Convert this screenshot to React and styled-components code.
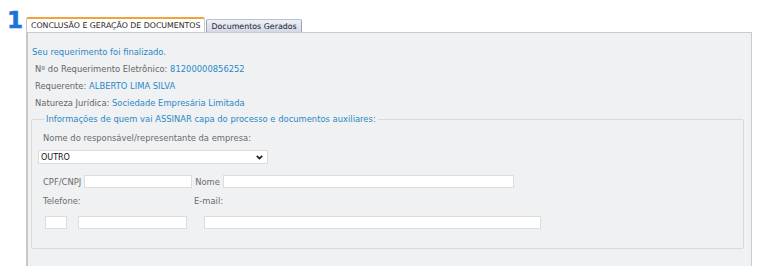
import React from 'react'
import styled, { createGlobalStyle } from "styled-components"

const Global = createGlobalStyle`
  body {
    margin: 0;
    background: #ffffff;
    font-family: "DejaVu Sans", Verdana, sans-serif;
  }
`

function App() {
  return (
    <Page>
      <Global />
      <Step>1</Step>
      <Main>
        <TabBar>
          <Tab active>CONCLUSÃO E GERAÇÃO DE DOCUMENTOS</Tab>
          <Tab>Documentos Gerados</Tab>
        </TabBar>
        <Panel>
          <Notice>Seu requerimento foi finalizado.</Notice>
          <Info>Nº do Requerimento Eletrônico: <Value>81200000856252</Value></Info>
          <Info>Requerente: <Value>ALBERTO LIMA SILVA</Value></Info>
          <Info>Natureza Jurídica: <Value>Sociedade Empresária Limitada</Value></Info>
          <Group>
            <Legend>Informações de quem vai ASSINAR capa do processo e documentos auxiliares:</Legend>
            <Label>Nome do responsável/representante da empresa:</Label>
            <SelectWrap>
              <Select defaultValue="OUTRO">
                <option>OUTRO</option>
              </Select>
              <Chevron viewBox="0 0 10 7">
                <path d="M1.2 1.2 L5 5 L8.8 1.2" fill="none" stroke="#1a1a1a" strokeWidth="2.4" />
              </Chevron>
            </SelectWrap>
            <Row>
              <Label inline>CPF/CNPJ</Label>
              <Input w={108} />
              <Label inline>Nome</Label>
              <Input w={291} />
            </Row>
            <Labels>
              <Label inline w={151}>Telefone:</Label>
              <Label inline>E-mail:</Label>
            </Labels>
            <Row pad={2}>
              <Input w={22} />
              <Input w={109} gap={11} />
              <Input w={337} gap={17} />
            </Row>
          </Group>
        </Panel>
      </Main>
    </Page>
  )
}

const Page = styled.div`
  display: flex;
  align-items: flex-start;
  padding: 12px 0 0 8px;
  height: 254px;
  overflow: hidden;
`
const Step = styled.div`
  width: 18px;
  margin-left: -1px;
  font-family: "DejaVu Sans", Verdana, sans-serif;
  font-weight: 900;
  font-size: 23px;
  line-height: 17px;
  height: 17px;
  color: #1a73d9;
  -webkit-text-stroke: 0.6px #1a73d9;
`
const Main = styled.div`
  width: 726px;
  margin-top: 5px;
  margin-left: 1px;
`
const TabBar = styled.div`
  display: flex;
  align-items: flex-end;
  gap: 1px;
  height: 15px;
`
const Tab = styled.div`
  box-sizing: border-box;
  font-size: ${p => (p.active ? "7.8px" : "7.9px")};
  color: #1f1f1f;
  padding: 0 4px;
  display: flex;
  align-items: center;
  height: ${p => (p.active ? "15px" : "13px")};
  background: ${p => (p.active ? "#ffffff" : "linear-gradient(#eef0f8, #d3d8e8)")};
  border: 1px solid ${p => (p.active ? "#c9c9c9" : "#9aa3b5")};
  border-top: ${p => (p.active ? "2px solid #f2a43a" : "1px solid #b7bfd0")};
  border-bottom: none;
  border-radius: 2px 2px 0 0;
`
const Panel = styled.div`
  box-sizing: border-box;
  height: 240px;
  background: #eff1f3;
  border: 1px solid #c9cbcd;
  border-left: 2px solid #c5c7c9;
  padding: 14px 7px 0 3px;
`
const Notice = styled.div`
  font-size: 8.4px;
  color: #2b88c6;
  padding-left: 1px;
  height: 17px;
`
const Info = styled.div`
  font-size: 8.4px;
  color: #666666;
  padding-left: 4px;
  height: 17px;
`
const Value = styled.span`
  color: #2b88c6;
`
const Group = styled.fieldset`
  box-sizing: border-box;
  margin: -1px 0 0;
  padding: 9px 0 0 6px;
  height: 135px;
  border: 1px solid #d8dadc;
  border-radius: 2px;
`
const Legend = styled.legend`
  font-size: 8.4px;
  color: #2b88c6;
  padding: 0 2px;
  margin-left: 6px;
`
const Label = styled.span`
  display: ${p => (p.inline ? "inline-block" : "block")};
  font-size: 8.4px;
  color: #6b6b6b;
  width: ${p => (p.w ? `${p.w}px` : "auto")};
  padding-left: ${p => (p.inline ? "0" : "5px")};
  margin-bottom: ${p => (p.inline ? "0" : "7px")};
`
const SelectWrap = styled.div`
  position: relative;
  width: 230px;
  height: 14px;
  margin-bottom: 11px;
`
const Select = styled.select`
  appearance: none;
  display: block;
  box-sizing: border-box;
  width: 230px;
  height: 14px;
  border: 1px solid #dcdcdc;
  background: #ffffff;
  font-family: "DejaVu Sans", Verdana, sans-serif;
  font-size: 8px;
  color: #111;
  padding: 0 2px;
  outline: none;
`
const Chevron = styled.svg`
  position: absolute;
  right: 5px;
  top: 5px;
  width: 7px;
  height: 5px;
  pointer-events: none;
`
const Row = styled.div`
  display: flex;
  align-items: center;
  gap: 3px;
  padding-left: ${p => (p.pad ? `${p.pad + 5}px` : "5px")};
  height: 13px;
`
const Labels = styled.div`
  display: flex;
  padding-left: 5px;
  margin: 8px 0 8px;
  height: 12px;
`
const Input = styled.input`
  box-sizing: border-box;
  width: ${p => p.w}px;
  height: 13px;
  margin-left: ${p => (p.gap ? `${p.gap - 3}px` : "0")};
  border: 1px solid #dddddd;
  background: #ffffff;
  padding: 0;
  outline: none;
`

export default App
